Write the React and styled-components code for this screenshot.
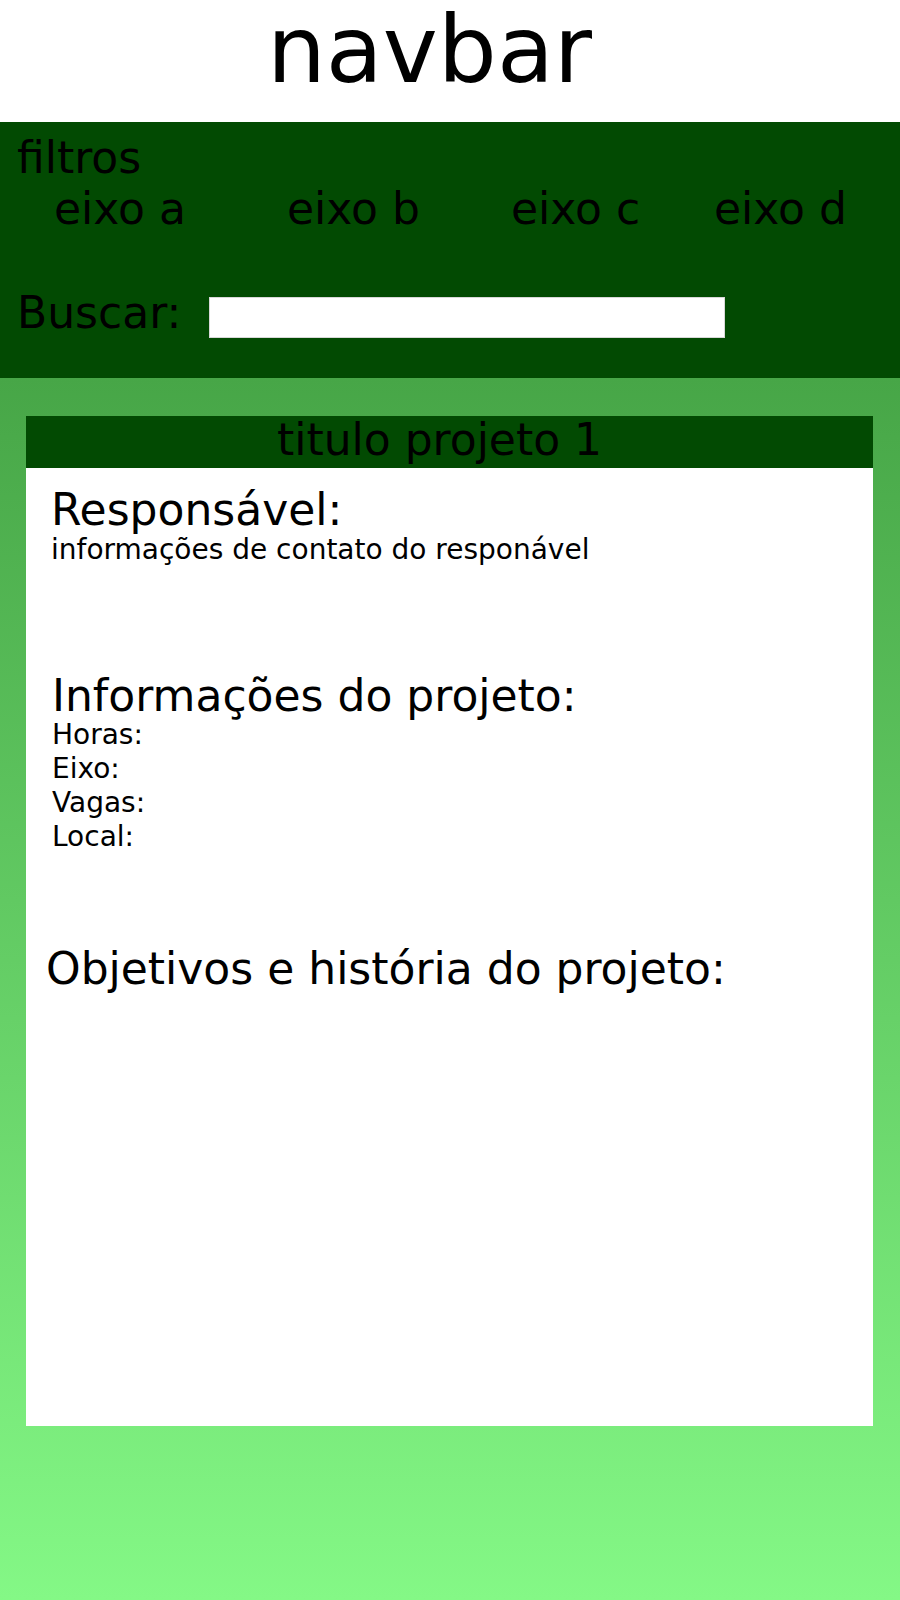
import React from "react";
import styled, { createGlobalStyle } from "styled-components";

// Page-wide reset
const GlobalStyle = createGlobalStyle`
  html, body {
    margin: 0;
    padding: 0;
  }

  body {
    font-family: "DejaVu Sans", Verdana, sans-serif;
    color: #000;
  }
`;

const eixos = ["eixo a", "eixo b", "eixo c", "eixo d"];
const infos = ["Horas:", "Eixo:", "Vagas:", "Local:"];

const App = () => {
  return (
    <StyPage>
      <GlobalStyle />
      <StyNavbar>
        <h1>navbar</h1>
      </StyNavbar>

      <StyFilters>
        <StyFilterTitle>filtros</StyFilterTitle>
        <StyEixos>
          {eixos.map((eixo) => (
            <span key={eixo}>{eixo}</span>
          ))}
        </StyEixos>
        <StySearch>
          <label htmlFor="buscar">Buscar:</label>
          <input id="buscar" type="text" />
        </StySearch>
      </StyFilters>

      <StyMain>
        <StyCard>
          <StyCardTitle>titulo projeto 1</StyCardTitle>

          <StyResponsavel>
            <StyHeading>Responsável:</StyHeading>
            <StySubText>informações de contato do responável</StySubText>
          </StyResponsavel>

          <StyInfo>
            <StyHeading $lh="44px">Informações do projeto:</StyHeading>
            {infos.map((info) => (
              <StyInfoLine key={info}>{info}</StyInfoLine>
            ))}
          </StyInfo>

          <StyObjetivos>
            <StyHeading>Objetivos e história do projeto:</StyHeading>
          </StyObjetivos>
        </StyCard>
      </StyMain>
    </StyPage>
  );
};

export default App;

const StyPage = styled.div`
  width: 900px;
  min-height: 1600px;
  display: flex;
  flex-direction: column;
`;

const StyNavbar = styled.header`
  height: 122px;
  background: #fff;
  box-sizing: border-box;
  padding: 0 41px 0 0;

  h1 {
    margin: 0;
    text-align: center;
    font-weight: normal;
    font-size: 93px;
    line-height: 100px;
  }
`;

const StyFilters = styled.section`
  background: #024a02;
  padding: 10px 0 40px 0;
  font-size: 44px;
`;

const StyFilterTitle = styled.div`
  padding-left: 17px;
`;

const StyEixos = styled.div`
  display: grid;
  grid-template-columns: 233px 224px 203px auto;
  padding-left: 54px;
`;

const StySearch = styled.div`
  display: flex;
  align-items: flex-end;
  margin-top: 53px;
  padding-left: 17px;

  label {
    margin-right: 28px;
  }

  input {
    width: 516px;
    height: 41px;
    box-sizing: border-box;
    border: 1px solid #d8d8d8;
    background: #fff;
    padding: 0 8px;
    font-family: inherit;
    font-size: 20px;
    outline: none;
  }
`;

const StyMain = styled.main`
  flex: 1;
  background: linear-gradient(to bottom, #47a647, #84f886);
  padding: 38px 27px 173px 26px;
`;

const StyCard = styled.article`
  background: #fff;
  height: 1010px;
  display: flex;
  flex-direction: column;
`;

const StyCardTitle = styled.h2`
  margin: 0;
  height: 52px;
  background: #024a02;
  font-size: 44px;
  font-weight: normal;
  line-height: 48px;
  text-align: center;
  padding-right: 20px;
`;

const StyHeading = styled.h3`
  margin: 0;
  font-size: 44px;
  font-weight: normal;
  line-height: ${(props) => props.$lh || "normal"};
`;

const StyResponsavel = styled.section`
  height: 186px;
  box-sizing: border-box;
  padding: 16px 0 0 25px;
`;

const StySubText = styled.p`
  margin: 0;
  font-size: 28px;
  line-height: 30px;
`;

const StyInfo = styled.section`
  padding: 20px 0 0 26px;
`;

const StyInfoLine = styled.div`
  font-size: 28px;
  line-height: 34px;
`;

const StyObjetivos = styled.section`
  padding: 89px 0 0 20px;
`;
